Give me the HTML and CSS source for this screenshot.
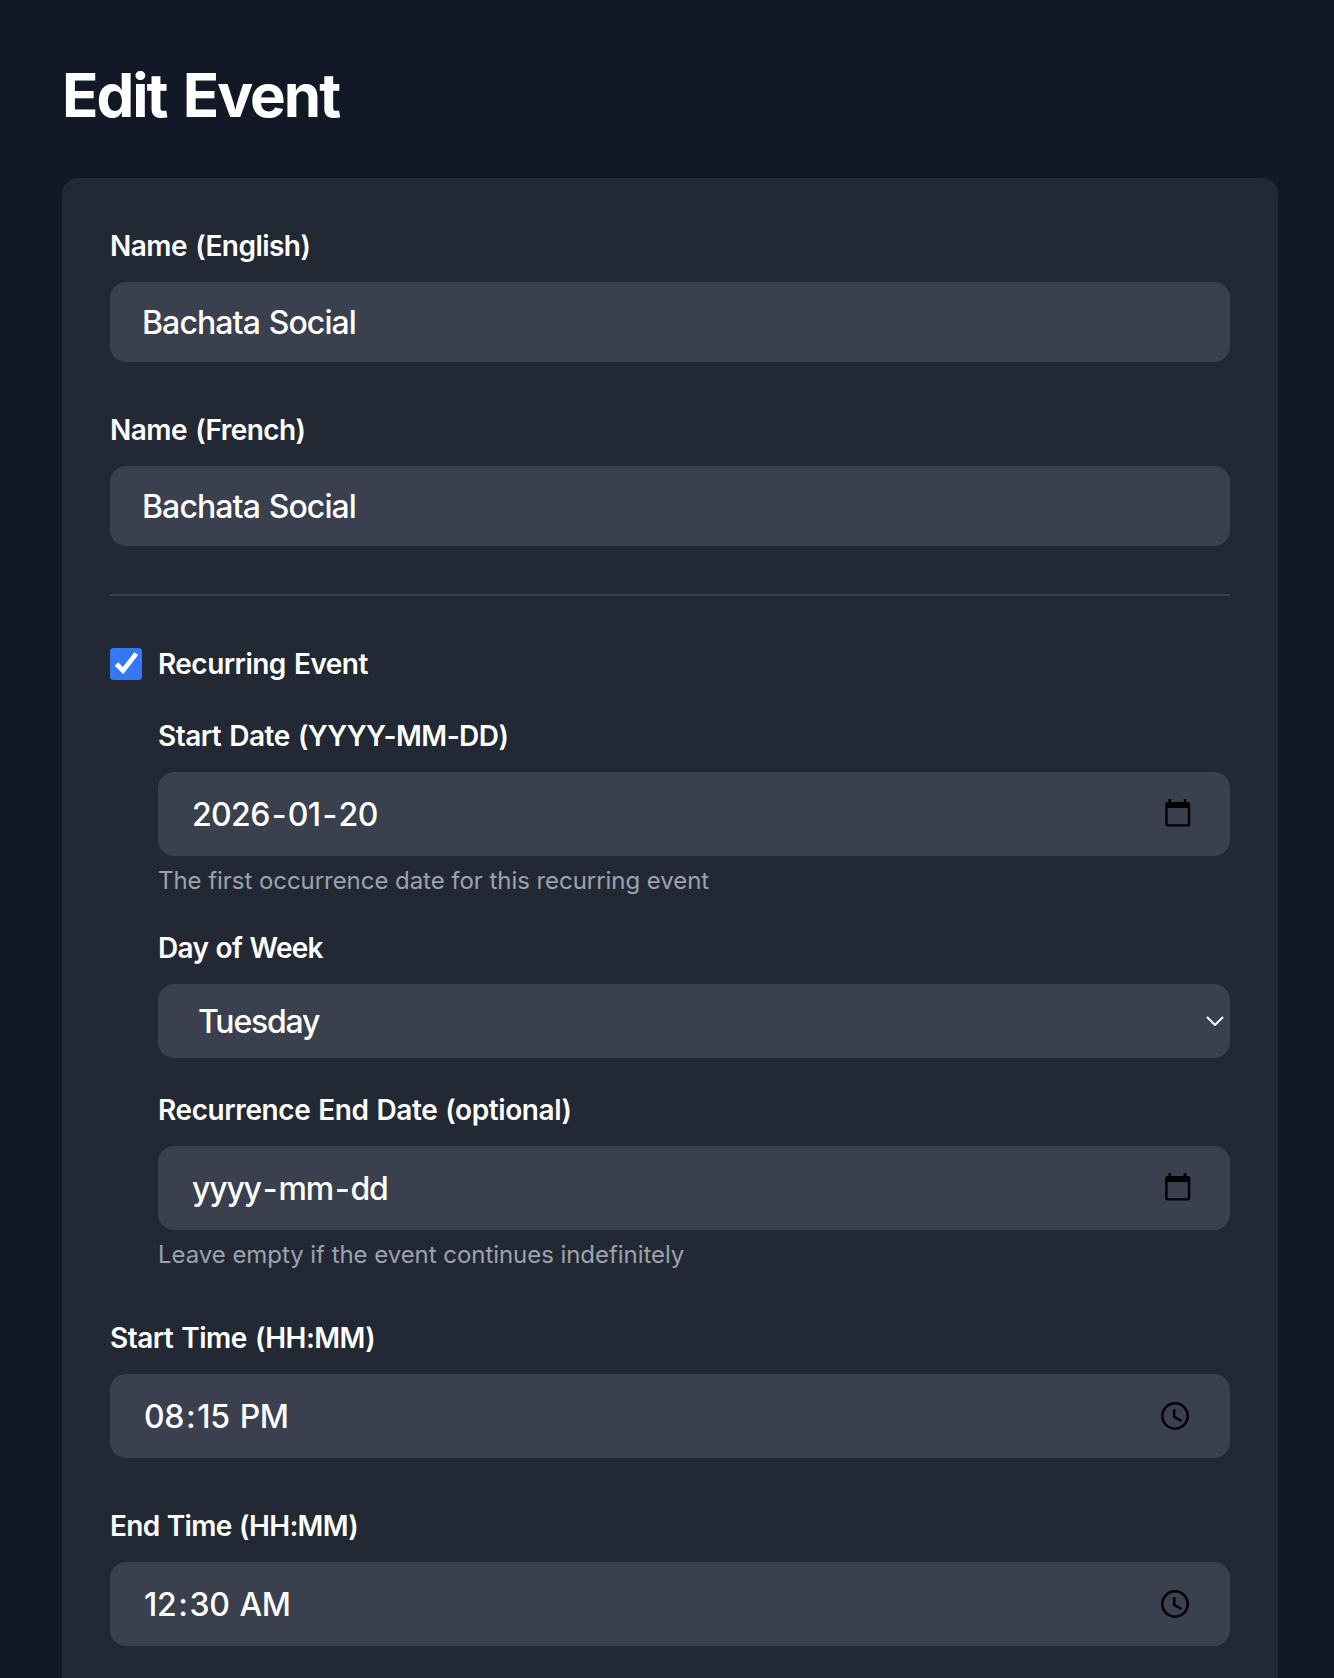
FILE: index.html
```html
<!DOCTYPE html>
<html lang="en">
<head>
    <meta charset="UTF-8">
    <title>Edit Event</title>
    <link rel="stylesheet" href="styles.css">
</head>
<body>
    <h1>Edit Event</h1>
    <form class="card">
        <div class="field">
            <div class="label">Name (English)</div>
            <div class="input text">Bachata Social</div>
        </div>
        <div class="field">
            <div class="label">Name (French)</div>
            <div class="input text">Bachata Social</div>
        </div>

        <div class="recurring">
            <div class="check-row">
                <svg class="checkbox" viewBox="0 0 32 32">
                    <rect width="32" height="32" rx="3.5" fill="#3478f6"/>
                    <path d="M6.5 16 L13 22.6 L26.2 5.6" fill="none" stroke="#fff" stroke-width="4.8"/>
                </svg>
                <div class="label">Recurring Event</div>
            </div>
            <div class="field">
                <div class="label">Start Date (YYYY-MM-DD)</div>
                <div class="input picker date">
                    <span>2026<i>-</i>01<i>-</i>20</span>
                    <svg class="icon" viewBox="0 0 26 28"><path fill-rule="evenodd" d="M3.5 0h2.6v3h12.6V0h2.6v3H23a2.3 2.3 0 0 1 2.3 2.3v20a2.3 2.3 0 0 1-2.3 2.3H2.5A2.3 2.3 0 0 1 .2 25.3V5.3A2.3 2.3 0 0 1 2.5 3h1zM2.6 9v16.2h20.2V9z"/></svg>
                </div>
                <p class="hint">The first occurrence date for this recurring event</p>
            </div>
            <div class="field">
                <div class="label tight">Day of Week</div>
                <div class="input select">
                    <span>Tuesday</span>
                    <svg class="chevron" viewBox="0 0 18 10"><path d="M1 1 L9 9 L17 1"/></svg>
                </div>
            </div>
            <div class="field">
                <div class="label loose">Recurrence End Date (optional)</div>
                <div class="input picker date empty">
                    <span>yyyy<i>-</i>mm<i>-</i>dd</span>
                    <svg class="icon" viewBox="0 0 26 28"><path fill-rule="evenodd" d="M3.5 0h2.6v3h12.6V0h2.6v3H23a2.3 2.3 0 0 1 2.3 2.3v20a2.3 2.3 0 0 1-2.3 2.3H2.5A2.3 2.3 0 0 1 .2 25.3V5.3A2.3 2.3 0 0 1 2.5 3h1zM2.6 9v16.2h20.2V9z"/></svg>
                </div>
                <p class="hint">Leave empty if the event continues indefinitely</p>
            </div>
        </div>

        <div class="field">
            <div class="label">Start Time (HH:MM)</div>
            <div class="input picker time">
                <span>08<i>:</i>15 PM</span>
                <svg class="icon" viewBox="0 0 28 28"><circle cx="14" cy="14" r="12.7"/><path d="M13.2 7.2v7.6l7.2 4.2"/></svg>
            </div>
        </div>
        <div class="field">
            <div class="label tight">End Time (HH:MM)</div>
            <div class="input picker time">
                <span>12<i>:</i>30 AM</span>
                <svg class="icon" viewBox="0 0 28 28"><circle cx="14" cy="14" r="12.7"/><path d="M13.2 7.2v7.6l7.2 4.2"/></svg>
            </div>
        </div>
    </form>
</body>
</html>
```
FILE: styles.css
```css
* {
    box-sizing: border-box;
}
body {
    display: flex;
    flex-direction: column;
    font-family: Inter, sans-serif;
    margin: 0;
    padding: 59px 56px 0 62px;
    height: 1678px;
    background-color: #121826;
    color: #fff;
}
h1 {
    margin: 0 0 47px;
    font-size: 60px;
    line-height: 72px;
    font-weight: 750;
    letter-spacing: -2px;
    word-spacing: 4px;
}
.card {
    display: flex;
    flex: 1;
    flex-direction: column;
    gap: 48px;
    padding: 48px 48px 0;
    border-radius: 16px 16px 0 0;
    background-color: #222935;
}
.label {
    font-size: 28px;
    line-height: 40px;
    font-weight: 600;
    letter-spacing: -0.55px;
    word-spacing: 1.8px;
}
.label.tight {
    letter-spacing: -0.7px;
    word-spacing: 1px;
}
.label.loose {
    letter-spacing: -0.4px;
    word-spacing: 1.2px;
}
.input {
    display: flex;
    align-items: center;
    height: 80px;
    margin-top: 16px;
    padding: 1px 32px 0;
    border-radius: 16px;
    background-color: #3b404f;
    font-size: 32px;
    font-weight: 450;
}
.input i {
    margin: 0 2px;
    font-style: normal;
}
.text {
    letter-spacing: -0.9px;
    word-spacing: 1px;
}
.recurring {
    display: flex;
    flex-direction: column;
    gap: 32px;
    padding-top: 48px;
    border-top: 2px solid #3b404f;
}
.recurring .field {
    margin-left: 48px;
}
.check-row {
    display: flex;
    align-items: center;
    gap: 16px;
}
.checkbox {
    width: 32px;
    height: 32px;
}
.picker {
    height: 84px;
    justify-content: space-between;
    padding-left: 34px;
}
.date {
    padding-right: 39px;
    letter-spacing: -0.65px;
}
.date.empty {
    letter-spacing: -1.2px;
}
.time {
    padding-right: 41px;
    letter-spacing: -0.4px;
    word-spacing: 2px;
}
.select {
    height: 74px;
    justify-content: space-between;
    padding: 1px 6px 0 40px;
    letter-spacing: -1.2px;
}
.hint {
    margin: 9px 0 -1px;
    font-size: 24px;
    line-height: 32px;
    letter-spacing: -0.05px;
    color: #9ca3af;
}
.date .icon {
    width: 26px;
    height: 28px;
    margin-bottom: 3px;
}
.time .icon {
    width: 28px;
    height: 28px;
    margin-bottom: 1px;
    fill: none;
    stroke: #000;
    stroke-width: 2.5;
}
.chevron {
    width: 18px;
    height: 10px;
    margin-bottom: 2px;
    fill: none;
    stroke: #fff;
    stroke-width: 2;
}
```
